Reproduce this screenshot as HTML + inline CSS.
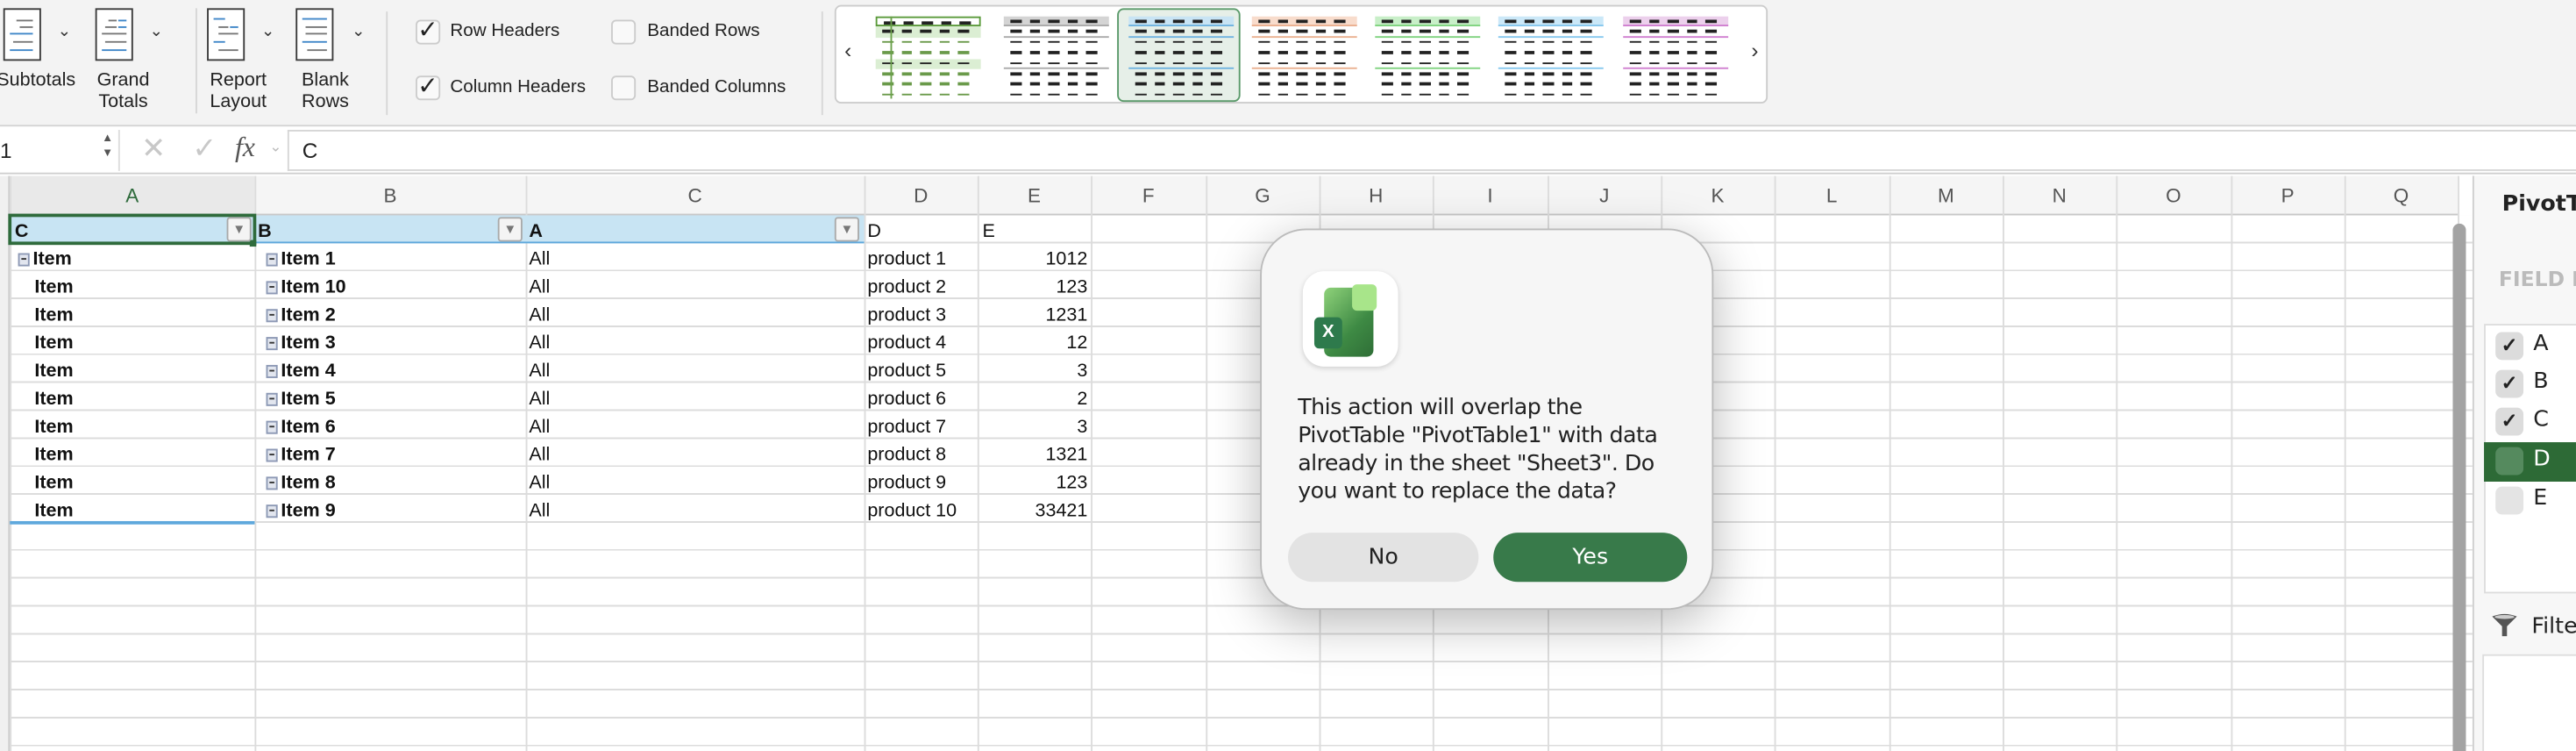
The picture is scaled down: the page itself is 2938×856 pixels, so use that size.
<!DOCTYPE html>
<html><head><meta charset="utf-8"><style>
*{box-sizing:border-box;margin:0;padding:0}
html,body{width:2938px;height:856px;overflow:hidden;background:#fff}
#w{position:absolute;left:0;top:0;width:1568px;height:457px;transform:scale(1.87372);transform-origin:0 0;font-family:"Liberation Sans",sans-serif;color:#222;overflow:hidden}
.a{position:absolute}
.rib{left:0;top:0;width:1568px;height:77px;background:#f3f3f3;border-bottom:1px solid #d2d2d2}
.lbl{font-size:11.5px;color:#222;line-height:13px;text-align:center}
.doc{width:23px;height:32px;border:1.5px solid #3a3a3a;background:#fff}
.doc i{position:absolute;height:1.3px;display:block}
.chev{font-size:10px;color:#333}
.sep{width:1px;background:#d6d6d6}
.cb{width:15px;height:15px;border:1px solid #ccc;border-radius:3px;background:#f9f9f9}
.cbl{font-size:11px;color:#222}
.gal{left:508px;top:3px;width:568px;height:60px;background:#fff;border:1px solid #ccc;border-radius:4px}
.th{position:absolute;top:6px;width:64px;height:50px}
.th .r{position:absolute;left:0;width:64px;height:6.4px}
.th .d{position:absolute;top:2px;width:6.5px;height:1.6px;background:#222}
.fb{left:0;top:77px;width:1568px;height:29px;background:#fff;border-bottom:1px solid #cfcfcf}
.ch{top:107px;height:24px;background:#f5f5f5;border-bottom:1.5px solid #c8c8c8;font-size:12px;color:#555;text-align:center;line-height:24px;font-family:"Liberation Sans Narrow","Liberation Sans",sans-serif}
.vl{top:107px;width:1px;height:350px;background:#dcdcdc}
.g{font-family:"Liberation Sans Narrow","Liberation Sans",sans-serif;font-size:11.5px;line-height:17px;color:#111;padding-top:1.5px}
.b{font-weight:bold}
.mb{display:inline-block;width:7px;height:8px;border:1px solid #8d99b5;background:#e2e6ef;vertical-align:-1px;margin-right:2px;position:relative}
.mb:after{content:"";position:absolute;left:1px;top:2.5px;width:3px;height:1px;background:#333}
.dd{width:15px;height:15px;border:1px solid #aaa;background:#f4f4f4;border-radius:2px;font-size:8px;color:#777;text-align:center;line-height:14px}
.fi{font-size:13.5px;color:#222;font-family:"DejaVu Sans","Liberation Sans",sans-serif}
.fcb{width:17px;height:17px;border-radius:4px;background:#dcdcdc;font-size:12px;text-align:center;line-height:17px;color:#222;font-weight:bold}
</style></head><body><div id="w">

<div class="a rib"></div>
<div class="a doc" style="left:2px;top:5px"><i style="left:7px;top:6px;width:10px;background:#777"></i><i style="left:9px;top:10px;width:8px;background:#777"></i><i style="left:3px;top:14px;width:14px;background:#3f86c8"></i><i style="left:5px;top:19px;width:12px;background:#777"></i><i style="left:3px;top:24px;width:14px;background:#3f86c8"></i></div>
<div class="a chev" style="left:35px;top:14px">&#8964;</div>
<div class="a doc" style="left:58px;top:5px"><i style="left:7px;top:6px;width:5px;background:#777"></i><i style="left:13px;top:6px;width:5px;background:#3f86c8"></i><i style="left:5px;top:10px;width:7px;background:#777"></i><i style="left:13px;top:10px;width:5px;background:#3f86c8"></i><i style="left:3px;top:14px;width:15px;background:#777"></i><i style="left:5px;top:19px;width:13px;background:#777"></i><i style="left:3px;top:24px;width:15px;background:#3f86c8"></i></div>
<div class="a chev" style="left:91px;top:14px">&#8964;</div>
<div class="a sep" style="left:119px;top:5px;height:64px"></div>
<div class="a doc" style="left:126px;top:5px"><i style="left:3px;top:5px;width:7px;background:#3f86c8"></i><i style="left:6px;top:10px;width:6px;background:#777"></i><i style="left:13px;top:10px;width:5px;background:#3f86c8"></i><i style="left:6px;top:14px;width:12px;background:#777"></i><i style="left:3px;top:19px;width:7px;background:#3f86c8"></i><i style="left:6px;top:24px;width:12px;background:#777"></i></div>
<div class="a chev" style="left:159px;top:14px">&#8964;</div>
<div class="a doc" style="left:180px;top:5px"><i style="left:3px;top:5px;width:15px;background:#3f86c8"></i><i style="left:5px;top:10px;width:13px;background:#777"></i><i style="left:5px;top:14px;width:13px;background:#777"></i><i style="left:3px;top:19px;width:15px;background:#3f86c8"></i><i style="left:6px;top:24px;width:12px;background:#777"></i></div>
<div class="a chev" style="left:214px;top:14px">&#8964;</div>
<div class="a lbl" style="left:-6px;top:43px;width:56px">Subtotals</div>
<div class="a lbl" style="left:50px;top:43px;width:50px">Grand<br>Totals</div>
<div class="a lbl" style="left:118px;top:43px;width:54px">Report<br>Layout</div>
<div class="a lbl" style="left:174px;top:43px;width:48px">Blank<br>Rows</div>
<div class="a sep" style="left:235px;top:7px;height:63px"></div>
<div class="a cb" style="left:253px;top:12px;font-size:15px;line-height:12px;text-align:center;color:#222">&#10003;</div>
<div class="a cbl" style="left:274px;top:13px">Row Headers</div>
<div class="a cb" style="left:253px;top:46px;font-size:15px;line-height:12px;text-align:center;color:#222">&#10003;</div>
<div class="a cbl" style="left:274px;top:47px">Column Headers</div>
<div class="a cb" style="left:372px;top:12px"></div>
<div class="a cbl" style="left:394px;top:13px">Banded Rows</div>
<div class="a cb" style="left:372px;top:46px"></div>
<div class="a cbl" style="left:394px;top:47px">Banded Columns</div>
<div class="a sep" style="left:500px;top:7px;height:63px"></div>

<div class="a gal">
<div class="a" style="left:5px;top:19px;font-size:13px;color:#333">&#8249;</div>
<div class="a" style="left:557px;top:19px;font-size:13px;color:#333">&#8250;</div>
<div class="a" style="left:171px;top:1px;width:75px;height:57px;border:1.5px solid #5a9a6a;border-radius:4px;background:#e6efe8"></div>
<div id="gal"></div>
</div>

<div class="a fb"></div>
<div class="a" style="left:0;top:79px;width:73px;height:25px;border-right:1px solid #ddd;font-size:13px;line-height:25px">1</div>
<div class="a" style="left:62px;top:80px;font-size:7px;color:#555;line-height:9px">&#9650;<br>&#9660;</div>
<div class="a" style="left:86px;top:80px;font-size:18px;color:#c8c8c8">&#10005;</div>
<div class="a" style="left:117px;top:80px;font-size:18px;color:#c8c8c8">&#10003;</div>
<div class="a" style="left:143px;top:80px;font-size:17px;color:#555;font-style:italic;font-family:'Liberation Serif',serif">fx</div>
<div class="a" style="left:164px;top:84px;font-size:9px;color:#bbb">&#8964;</div>
<div class="a" style="left:175px;top:79px;width:1400px;height:25px;border:1px solid #d6d6d6;border-right:none;font-size:13px;line-height:23px;padding-left:8px">C</div>

<div class="a" style="left:0;top:131px;width:1505px;height:326px;background:repeating-linear-gradient(to bottom,#fff 0,#fff 16px,#dcdcdc 16px,#dcdcdc 17px)"></div>
<div class="a" style="left:0;top:107px;width:6px;height:350px;background:#f0f0f0;border-right:1px solid #ccc"></div>
<div id="cols"></div>

<div class="a" style="left:6px;top:131px;width:520px;height:17px;background:#c8e4f3;border-bottom:1.5px solid #5ea8dc"></div>
<div class="a" style="left:6px;top:317px;width:149px;height:1.5px;background:#5ea8dc"></div>
<div class="a" style="left:5px;top:130px;width:151px;height:19px;border:2px solid #2f6b3c"></div>
<div class="a" style="left:152px;top:146px;width:4px;height:4px;background:#2f6b3c"></div>
<div class="a g b" style="left:9px;top:131px">C</div>
<div class="a g b" style="left:157px;top:131px">B</div>
<div class="a g b" style="left:322px;top:131px">A</div>
<div class="a g" style="left:528px;top:131px">D</div>
<div class="a g" style="left:598px;top:131px">E</div>
<div class="a dd" style="left:138px;top:132px">&#9660;</div>
<div class="a dd" style="left:303px;top:132px">&#9660;</div>
<div class="a dd" style="left:508px;top:132px">&#9660;</div>
<div id="rows"></div>

<div class="a" style="left:1493px;top:136px;width:8px;height:330px;background:#a3a3a3;border-radius:4px"></div>
<div class="a" style="left:1505px;top:107px;width:63px;height:350px;background:#f7f7f7;border-left:1px solid #cfcfcf"></div>
<div class="a" style="left:1523px;top:116px;font-size:13.5px;font-weight:bold;font-family:'DejaVu Sans',sans-serif;white-space:nowrap">PivotTa</div>
<div class="a" style="left:1521px;top:162px;font-size:12.5px;font-weight:bold;color:#bbb;font-family:'DejaVu Sans',sans-serif;white-space:nowrap">FIELD N</div>
<div class="a" style="left:1512px;top:197px;width:60px;height:164px;background:#fff;border:1px solid #ddd"></div>
<div class="a" style="left:1512px;top:269px;width:56px;height:24px;background:#2d6a36"></div>
<div class="a fcb" style="left:1519px;top:202px">&#10003;</div><div class="a fi" style="left:1542px;top:201px">A</div>
<div class="a fcb" style="left:1519px;top:225px">&#10003;</div><div class="a fi" style="left:1542px;top:224px">B</div>
<div class="a fcb" style="left:1519px;top:248px">&#10003;</div><div class="a fi" style="left:1542px;top:247px">C</div>
<div class="a fcb" style="left:1519px;top:272px;background:#558a5e"></div><div class="a fi" style="left:1542px;top:271px;color:#fff">D</div>
<div class="a fcb" style="left:1519px;top:296px;background:#e4e4e4"></div><div class="a fi" style="left:1542px;top:295px">E</div>
<svg class="a" style="left:1516px;top:373px" width="17" height="16" viewBox="0 0 17 16"><path d="M1 2 Q8.5 -1 16 2 L10 8 L10 14 L7 14 L7 8 Z" fill="#555"/><ellipse cx="8.5" cy="2.3" rx="6" ry="1.2" fill="#ccc"/></svg>
<div class="a fi" style="left:1541px;top:373px">Filte</div>
<div class="a" style="left:1511px;top:398px;width:60px;height:70px;background:#fff;border:1px solid #ddd"></div>

<div class="a" style="left:767px;top:139px;width:276px;height:232px;background:#f6f6f6;border-radius:28px;border:0.5px solid #bbb;box-shadow:0 8px 30px rgba(0,0,0,.28)"></div>
<div class="a" style="left:793px;top:165px;width:58px;height:58px;background:#fff;border-radius:13px;box-shadow:0 1px 3px rgba(0,0,0,.15)"></div>
<div class="a" style="left:806px;top:175px;width:30px;height:42px;background:linear-gradient(135deg,#8fd27a,#3e8a44 60%,#2f6e37);border-radius:4px"></div>
<div class="a" style="left:823px;top:173px;width:15px;height:16px;background:#a8e58a;border-radius:3px"></div>
<div class="a" style="left:800px;top:193px;width:17px;height:19px;background:#2e7a4c;border-radius:3px;color:#fff;font-size:11px;font-weight:bold;text-align:center;line-height:19px">X</div>
<div class="a" style="left:790px;top:240px;width:250px;font-size:13.5px;line-height:17px;color:#222;font-family:'DejaVu Sans','Liberation Sans',sans-serif;letter-spacing:-0.3px;white-space:nowrap">This action will overlap the<br>PivotTable "PivotTable1" with data<br>already in the sheet "Sheet3". Do<br>you want to replace the data?</div>
<div class="a" style="left:784px;top:324px;width:116px;height:30px;background:#e3e3e3;border-radius:15px;text-align:center;line-height:30px;font-size:13.5px;font-family:'DejaVu Sans',sans-serif">No</div>
<div class="a" style="left:909px;top:324px;width:118px;height:30px;background:#387a4a;border-radius:15px;text-align:center;line-height:30px;font-size:13.5px;color:#fff;font-family:'DejaVu Sans',sans-serif">Yes</div>

<script>
var xs=[6,155,320,526,595,664,734,803,872,942,1011,1080,1150,1219,1288,1358,1427,1496];
var L="ABCDEFGHIJKLMNOPQ",h="";
for(var i=0;i<17;i++){var x=xs[i],w=xs[i+1]-x;
h+='<div class="a ch" style="left:'+x+'px;width:'+w+'px;'+(i==0?'background:#e9e9e9;color:#2f6b3c;':'')+'">'+L[i]+'</div>';
h+='<div class="a vl" style="left:'+x+'px"></div>';}
h+='<div class="a vl" style="left:1496px"></div>';
document.getElementById('cols').innerHTML=h;
var b=['Item 1','Item 10','Item 2','Item 3','Item 4','Item 5','Item 6','Item 7','Item 8','Item 9'];
var e=[1012,123,1231,12,3,2,3,1321,123,33421];r="";
for(var j=0;j<10;j++){var y=148+j*17;
r+='<div class="a g b" style="left:'+(j==0?11:21)+'px;top:'+y+'px">'+(j==0?'<span class="mb"></span>':'')+'Item</div>';
r+='<div class="a g b" style="left:162px;top:'+y+'px"><span class="mb"></span>'+b[j]+'</div>';
r+='<div class="a g" style="left:322px;top:'+y+'px">All</div>';
r+='<div class="a g" style="left:528px;top:'+y+'px">product '+(j+1)+'</div>';
r+='<div class="a g" style="left:596px;width:66px;text-align:right;top:'+y+'px">'+e[j]+'</div>';}
document.getElementById('rows').innerHTML=r;
var gx=[24,102,178,253,328,403,479],band=['#dbeed3','#d4d4d4','#c8e4f4','#f8dccc','#c8efc8','#cbe8f8','#ecd0ec'],ln=['#dcefd2','#aaa','#6fb3e0','#eab08f','#7fd37f','#86c8ee','#d07fd0'],g="";
for(var k=0;k<7;k++){g+='<div class="th" style="left:'+gx[k]+'px">';
for(var rr=0;rr<8;rr++){var st='top:'+(rr*6.4)+'px;';
if(rr==0)st+='background:'+band[k]+';border-bottom:1px solid '+ln[k]+';';
if(rr==1||rr==4)st+='border-bottom:1px solid '+ln[k]+';';
if(k==0&&rr==0)st='top:0;border:1px solid #5a9a3a;background:#fff;';
if(k==0&&(rr==1||rr==4))st='top:'+(rr*6.4)+'px;background:#dbeed3;';
g+='<div class="r" style="'+st+'">';
for(var d=0;d<5;d++)g+='<div class="d" style="left:'+(4+d*11.5)+'px;'+(k==0&&rr>0&&rr!=4&&rr!=1?'background:#6a9a4a':'')+'"></div>';
g+='</div>';}
if(k==0)g+='<div style="position:absolute;left:9px;top:0;width:1px;height:50px;background:#6aa04a"></div>';
g+='</div>';}
document.getElementById('gal').innerHTML=g;
</script>
</div></body></html>
